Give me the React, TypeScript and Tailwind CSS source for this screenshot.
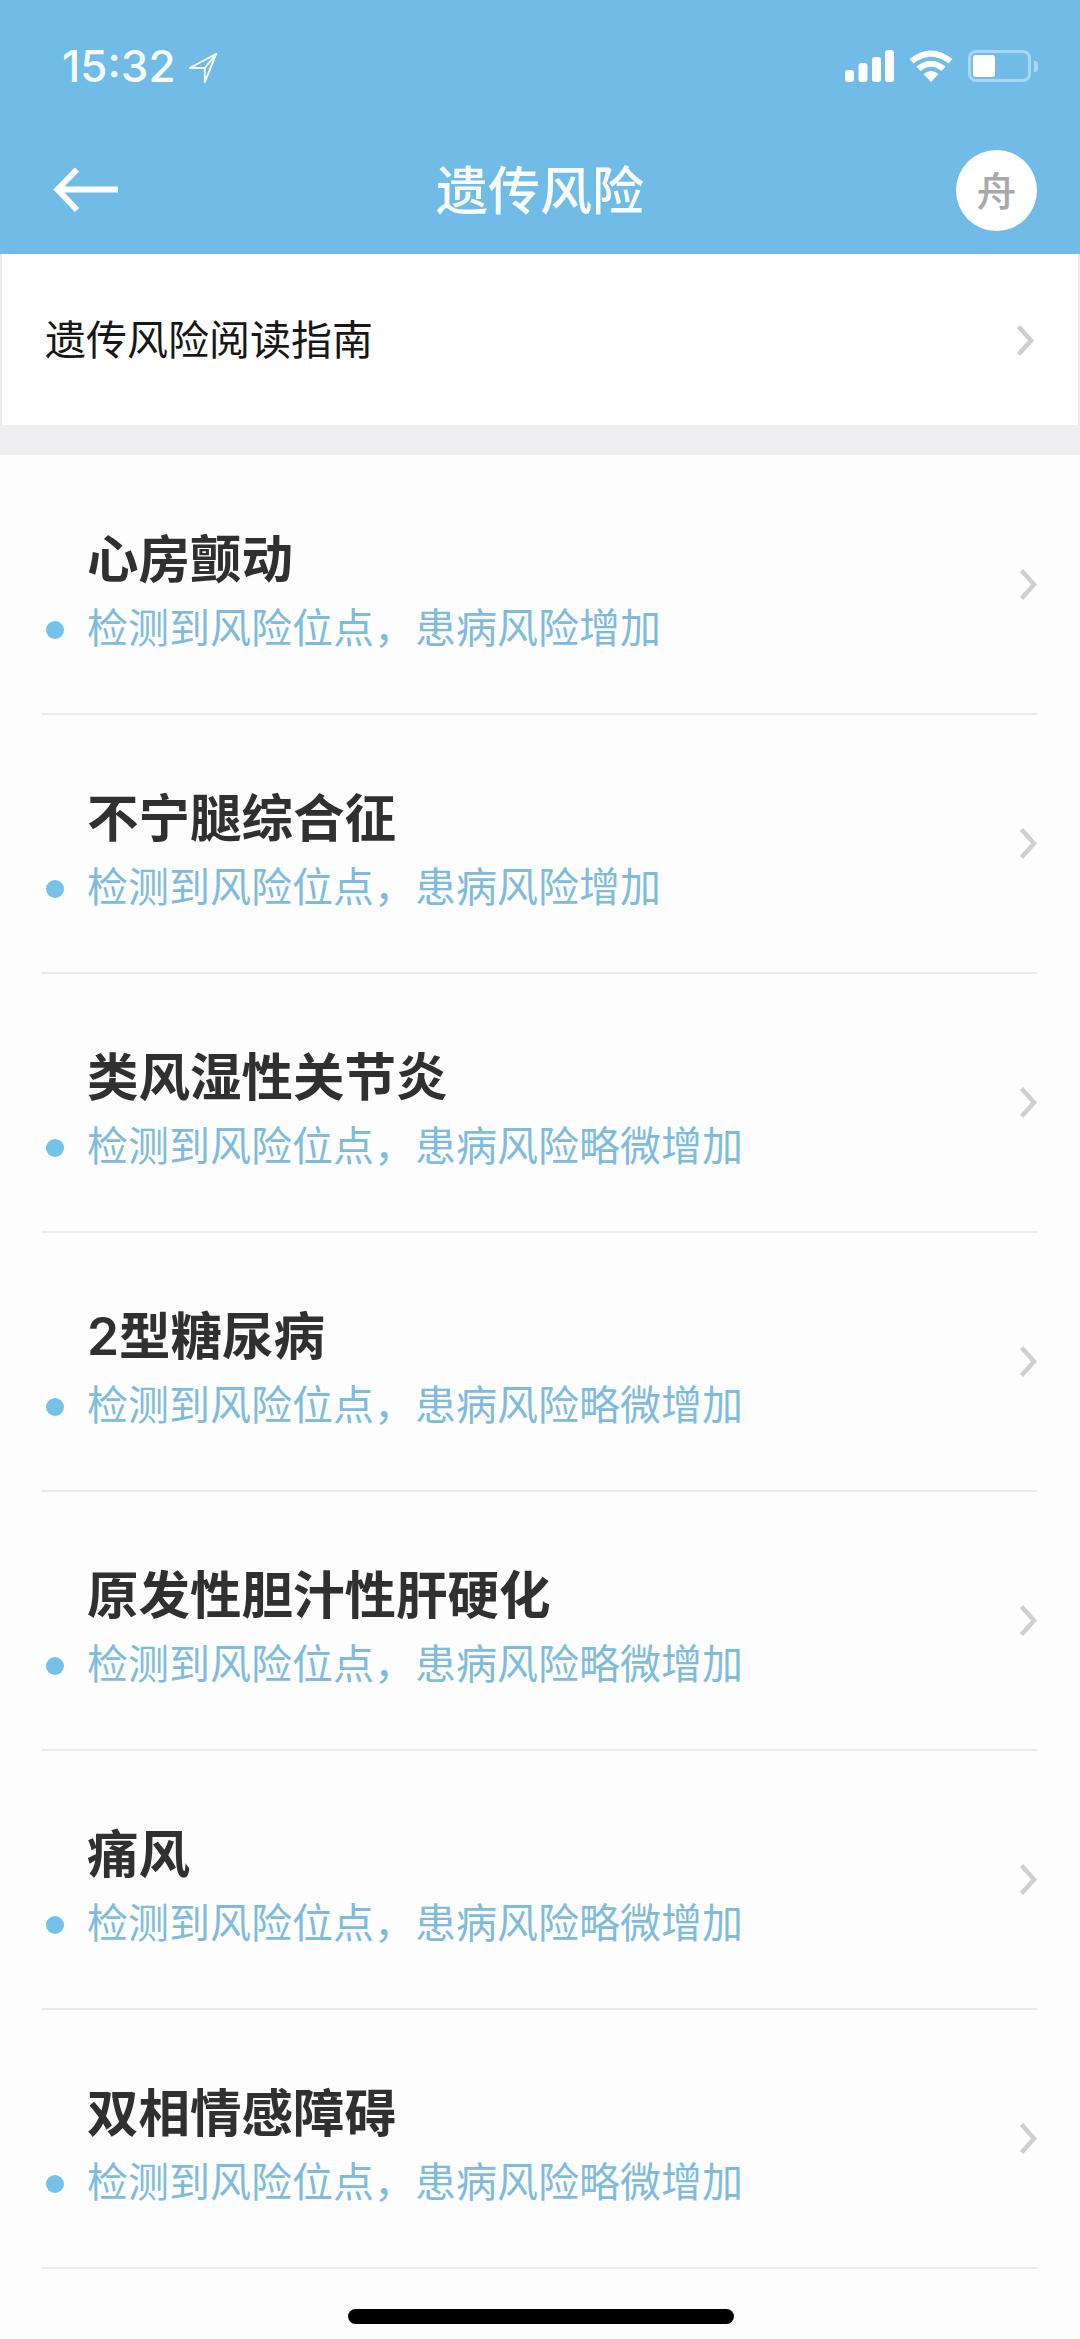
const FONT = "font-['Inter','Noto_Sans_CJK_SC','Noto_Sans',sans-serif]";

const rows = [
  ["心房颤动", "检测到风险位点，患病风险增加"],
  ["不宁腿综合征", "检测到风险位点，患病风险增加"],
  ["类风湿性关节炎", "检测到风险位点，患病风险略微增加"],
  ["2型糖尿病", "检测到风险位点，患病风险略微增加"],
  ["原发性胆汁性肝硬化", "检测到风险位点，患病风险略微增加"],
  ["痛风", "检测到风险位点，患病风险略微增加"],
  ["双相情感障碍", "检测到风险位点，患病风险略微增加"],
];

function Chevron() {
  return (
    <svg width="18" height="31" viewBox="0 0 18 31" fill="none" className="shrink-0">
      <path d="M2.500 1.500 L15 15.500 L2.500 29.500" stroke="#cfcfcf" strokeWidth="4.500" />
    </svg>
  );
}

export default function App() {
  return (
    <div className={`w-[1080px] h-[2339px] overflow-hidden bg-[#fdfdfd] relative flex flex-col ${FONT}`}>
      <header className="h-[254px] bg-[#70bce7] shrink-0 flex flex-col">
        <div className="h-[128px] flex justify-between pl-[62px] pr-[42px] pt-[40px]">
          <div className="flex items-start gap-[12px]">
            <span className="text-[44px] leading-[52px] font-medium text-white/95">15:32</span>
            <svg width="30" height="30" viewBox="0 0 32 34" fill="none" className="mt-[13px]">
              <path d="M31 1 L1 17 L18 17 L18 33 Z M18 17 L31 1" stroke="white" strokeWidth="2" strokeLinejoin="round" />
            </svg>
          </div>
          <div className="flex items-start gap-[14px] pt-[10px]">
            <svg width="50" height="32" viewBox="0 0 50 32" fill="white">
              <rect x="0" y="20" width="9" height="12" rx="3" />
              <rect x="13.500" y="13" width="9" height="19" rx="3" />
              <rect x="27" y="7" width="9" height="25" rx="3" />
              <rect x="40" y="0" width="9" height="32" rx="3" />
            </svg>
            <svg width="44" height="32" viewBox="0 0 44 32" fill="white" className="mr-[1px]">
              <path d="M22 32 L14.500 24 Q22 18 29.500 24 Z" />
              <path d="M11.500 21 L7.500 16.500 Q22 5 36.500 16.500 L32.500 21 Q22 12.500 11.500 21 Z" />
              <path d="M4.500 13.500 L0.500 9 Q22 -8 43.500 9 L39.500 13.500 Q22 0 4.500 13.500 Z" />
            </svg>
            <div className="flex items-center gap-[3px]">
              <div className="w-[63px] h-[32px] rounded-[8px] border-[3px] border-white/40 p-[2px]">
                <div className="w-[22px] h-full rounded-[3px] bg-white" />
              </div>
              <div className="w-[4px] h-[11px] rounded-r-[3px] bg-white/40" />
            </div>
          </div>
        </div>
        <div className="flex-1 relative flex items-center justify-center pt-[2px]">
          <svg width="66" height="46" viewBox="0 0 66 46" fill="none" className="absolute left-[53px] top-[39px]">
            <path d="M24 2.500 L4.500 22.500 L24 43 M4.500 22.500 H65" stroke="white" strokeWidth="6" />
          </svg>
          <span className="text-[52px] leading-[60px] text-white/95 font-medium">遗传风险</span>
          <div className="absolute left-[956px] top-[22px] w-[81px] h-[81px] rounded-full bg-white flex items-center justify-center pt-[2px] text-[40px] font-medium text-[#a9a9a9]">
            舟
          </div>
        </div>
      </header>

      <div className="h-[171px] shrink-0 bg-white border-x-2 border-[#ececec] flex items-center justify-between pl-[43px] pr-[44px] pt-[1px]">
        <span className="text-[41px] leading-[48px] text-[#171717]">遗传风险阅读指南</span>
        <Chevron />
      </div>
      <div className="h-[30px] shrink-0 bg-[#eeedf0]" />

      <main className="flex-1 pt-[1px]">
        {rows.map(([title, sub]) => (
          <div key={title} className="pl-[42px] pr-[43px]">
            <div className="h-[259px] border-b-2 border-[#eaeaea] flex items-center justify-between">
              <div className="flex flex-col pt-[13px]">
                <div className="pl-[45px] text-[51.500px] leading-[60px] font-semibold text-[#303030]">{title}</div>
                <div className="flex items-center mt-[14px]">
                  <span className="w-[18px] h-[18px] rounded-full bg-[#74c1ea] mt-[3px] ml-[4px] mr-[23px]" />
                  <span className="text-[41px] leading-[50px] text-[#7fbcdb]">{sub}</span>
                </div>
              </div>
              <Chevron />
            </div>
          </div>
        ))}
      </main>

      <div className="absolute left-[348px] bottom-[15px] w-[386px] h-[15px] rounded-full bg-black" />
    </div>
  );
}
